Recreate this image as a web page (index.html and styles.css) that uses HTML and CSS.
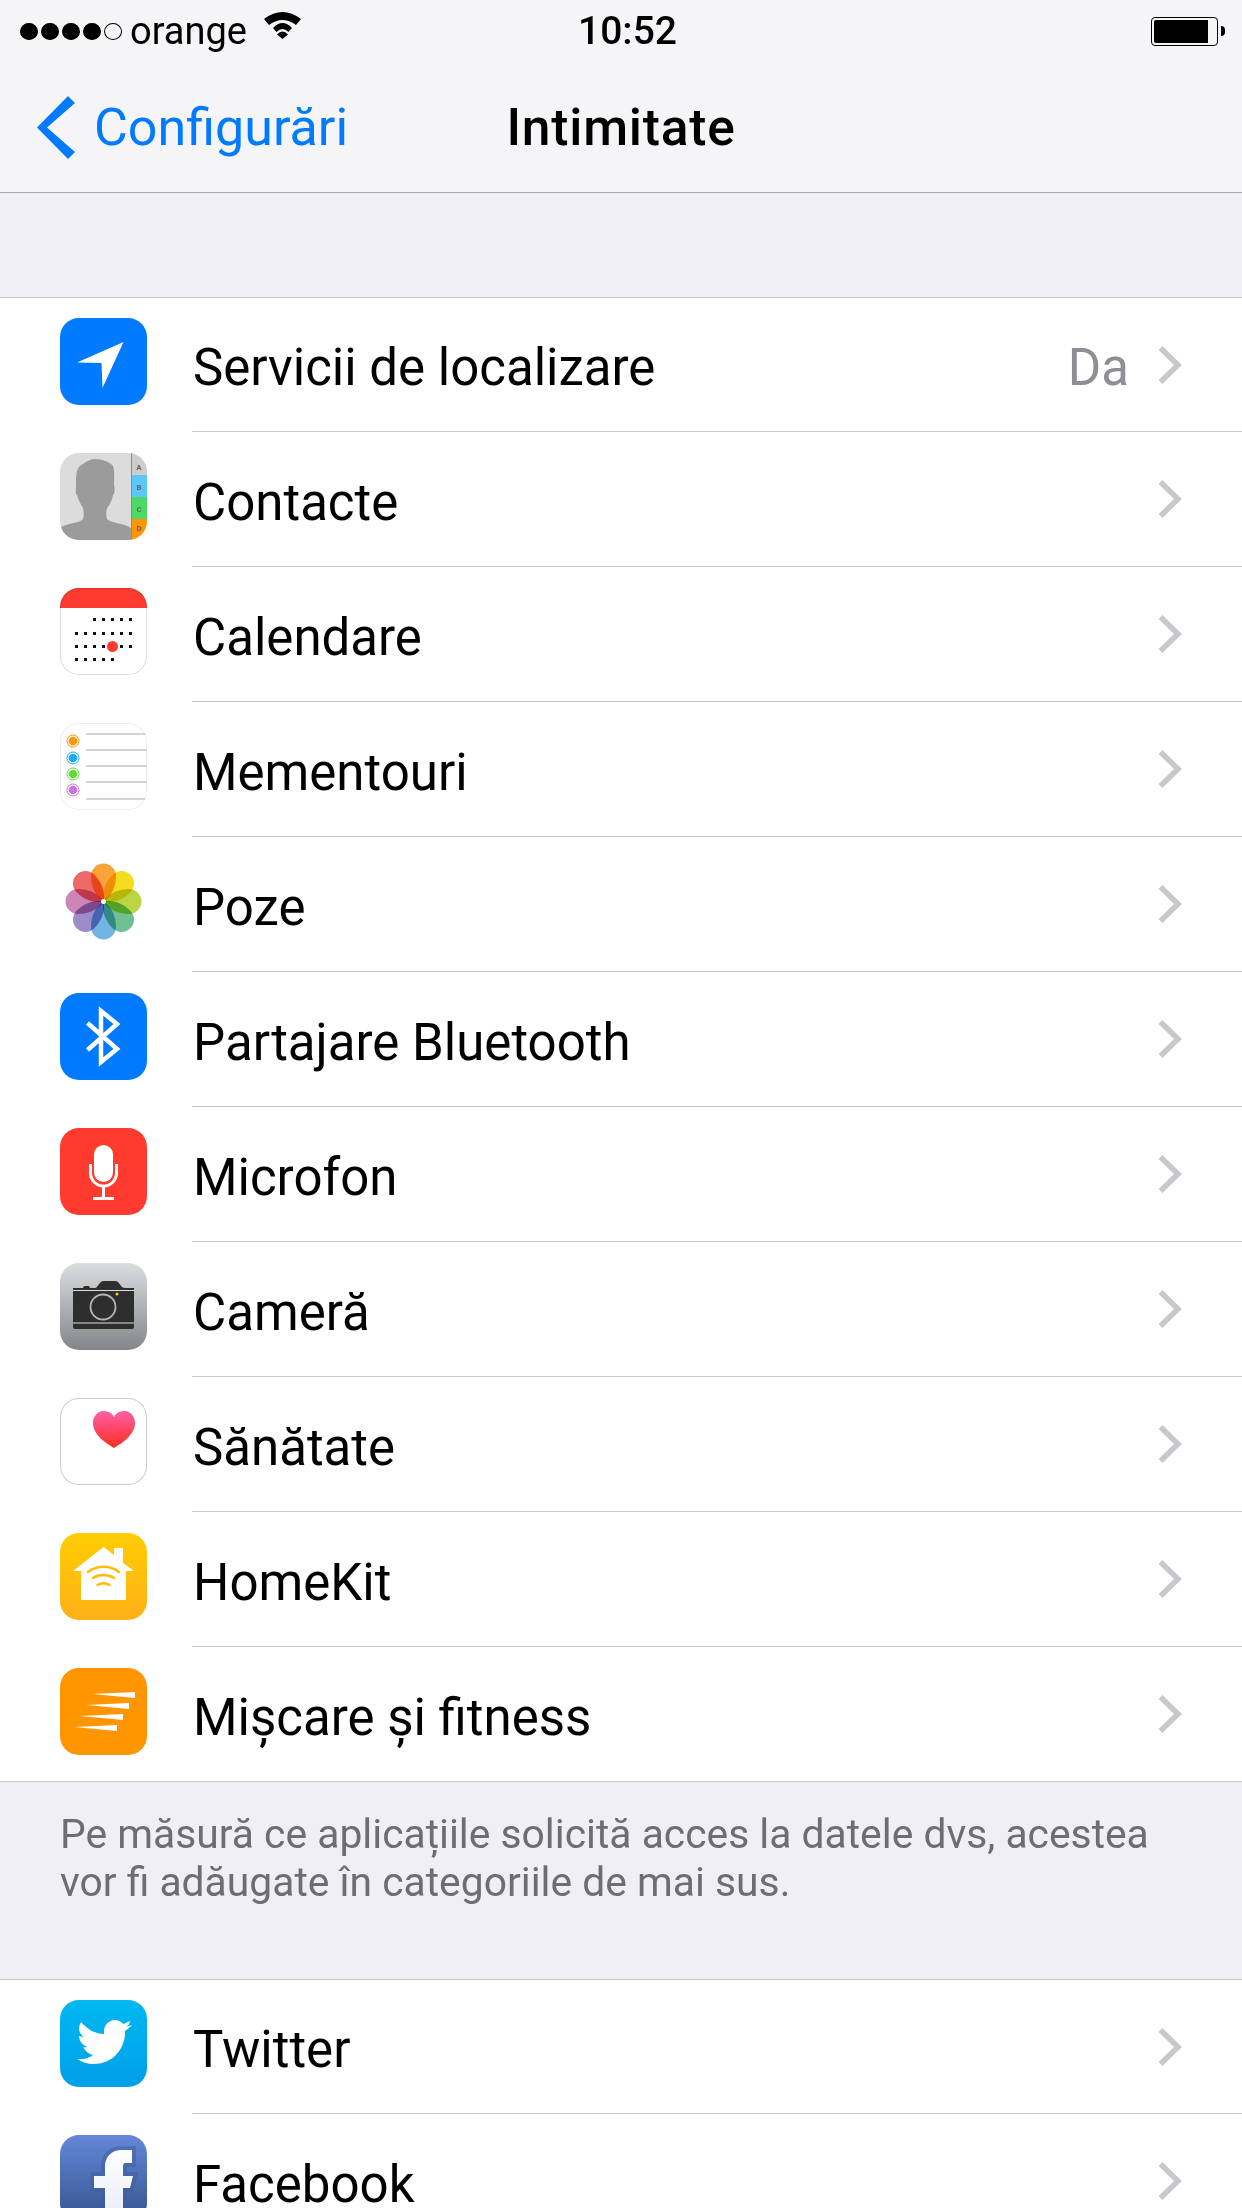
FILE: index.html
```html
<!DOCTYPE html>
<html lang="ro">
<head>
    <meta charset="UTF-8">
    <title>Intimitate</title>
    <link rel="stylesheet" href="styles.css">
</head>
<body>

    <header class="top">
        <div class="status">
            <div class="status-left">
                <span class="dots"><i></i><i></i><i></i><i></i><i class="off"></i></span>
                <span class="carrier">orange</span>
                <svg class="wifi" viewBox="0 0 37 27"><path d="M0 7Q18.500-7 37 7L32 13Q18.500 3 5 13Z"/><path d="M9 16Q18.500 6 28 16L24.500 20Q18.500 14 12.500 20Z"/><path d="M13 22.500Q18.500 16.500 24 22.500L18.500 27Z"/></svg>
            </div>
            <span class="clock">10:52</span>
            <div class="status-right">
                <span class="battery"><b></b></span><span class="nub"></span>
            </div>
        </div>
        <nav class="nav">
            <a class="back">
                <svg class="back-arrow" viewBox="0 0 38 63"><path d="M31 0 38 7 10 31.500 38 56 31 63 0 31.500Z" fill="#007aff"/></svg>
                <span>Configurări</span>
            </a>
            <h1>Intimitate</h1>
        </nav>
    </header>

    <ul class="group first">
        <li class="row">
            <span class="icon"><svg viewBox="0 0 87 87"><rect width="87" height="87" fill="#007aff"/><path d="M17 44.500 63.500 24 42.500 70 41.500 45Z" fill="#fff"/></svg></span>
            <span class="name">Servicii de localizare</span><span class="value">Da</span><svg class="chev" viewBox="0 0 24 40"><path d="M2.500 3 20 20 2.500 37" fill="none" stroke="#c7c7cc" stroke-width="5.500"/></svg>
        </li>
        <li class="row">
            <span class="icon"><svg viewBox="0 0 87 87"><rect width="87" height="87" fill="#dcdcdc"/><path d="M1 74C8 70 20 70 23 66 24 62 24 59 23 55 20 50 18 46 17 42 15 40 16 36 16 32 16 25 16 16 20 13 26 9 30 6 35 6 42 6 50 9 53 13 55 18 54 26 54 32 55 36 55 40 53 42 52 47 50 52 47 55 46 59 46 62 47 66 50 70 64 70 71 75V87H1Z" fill="#9b9b9b"/><rect x="71" width="16" height="22" fill="#cfcdc9"/><rect x="71" y="22" width="16" height="22" fill="#5ac8fa"/><rect x="71" y="44" width="16" height="22" fill="#4cd964"/><rect x="71" y="66" width="16" height="21" fill="#ff9500"/><path d="M71 0h1v87h-1z" fill="#8e8e8e"/><g class="tab-letters"><text x="79" y="17">A</text><text x="79" y="37">B</text><text x="79" y="59">C</text><text x="79" y="78">D</text></g></svg></span>
            <span class="name">Contacte</span><svg class="chev" viewBox="0 0 24 40"><path d="M2.500 3 20 20 2.500 37" fill="none" stroke="#c7c7cc" stroke-width="5.500"/></svg>
        </li>
        <li class="row">
            <span class="icon lined"><svg viewBox="0 0 87 87"><rect width="87" height="87" fill="#fff"/><rect width="87" height="20" fill="#ff3b30"/><g fill="#111"><path d="M33 30h3v3h-3zM42 30h3v3h-3zM51 30h3v3h-3zM60 30h3v3h-3zM69 30h3v3h-3zM15 44h3v3h-3zM24 44h3v3h-3zM33 44h3v3h-3zM42 44h3v3h-3zM51 44h3v3h-3zM60 44h3v3h-3zM69 44h3v3h-3zM15 57h3v3h-3zM24 57h3v3h-3zM33 57h3v3h-3zM42 57h3v3h-3zM60 57h3v3h-3zM69 57h3v3h-3zM15 70h3v3h-3zM24 70h3v3h-3zM33 70h3v3h-3zM42 70h3v3h-3zM51 70h3v3h-3z"/></g><circle cx="52.500" cy="58.500" r="5.500" fill="#ff3b30"/></svg></span>
            <span class="name">Calendare</span><svg class="chev" viewBox="0 0 24 40"><path d="M2.500 3 20 20 2.500 37" fill="none" stroke="#c7c7cc" stroke-width="5.500"/></svg>
        </li>
        <li class="row">
            <span class="icon lined pale"><svg viewBox="0 0 87 87"><rect width="87" height="87" fill="#fff"/><path d="M26 11h61M26 27h61M26 43h61M26 59h61M26 76h61" stroke="#aaa" stroke-width="1"/><g fill="none" stroke-width="1"><circle cx="13" cy="18" r="6" stroke="#ff9500"/><circle cx="13" cy="35" r="6" stroke="#1badf8"/><circle cx="13" cy="51" r="6" stroke="#63da38"/><circle cx="13" cy="67" r="6" stroke="#cc73e1"/></g><circle cx="13" cy="18" r="4.300" fill="#ff9500"/><circle cx="13" cy="35" r="4.300" fill="#1badf8"/><circle cx="13" cy="51" r="4.300" fill="#63da38"/><circle cx="13" cy="67" r="4.300" fill="#cc73e1"/></svg></span>
            <span class="name">Mementouri</span><svg class="chev" viewBox="0 0 24 40"><path d="M2.500 3 20 20 2.500 37" fill="none" stroke="#c7c7cc" stroke-width="5.500"/></svg>
        </li>
        <li class="row">
            <span class="icon"><svg viewBox="0 0 87 87"><defs><path id="petal" d="M43.500 43.500C35 38 31 28 31 18A12.500 12.500 0 0 1 56 18C56 28 52 38 43.500 43.500Z"/></defs><rect width="87" height="87" fill="#fff"/><use class="petal" href="#petal" fill="#f9a33b"/><use class="petal" href="#petal" fill="#f6dc1e" transform="rotate(45 43.500 43.500)"/><use class="petal" href="#petal" fill="#bcd544" transform="rotate(90 43.500 43.500)"/><use class="petal" href="#petal" fill="#6fc193" transform="rotate(135 43.500 43.500)"/><use class="petal" href="#petal" fill="#72b5e3" transform="rotate(180 43.500 43.500)"/><use class="petal" href="#petal" fill="#9c8cc8" transform="rotate(225 43.500 43.500)"/><use class="petal" href="#petal" fill="#cc85b5" transform="rotate(270 43.500 43.500)"/><use class="petal" href="#petal" fill="#ee6a6a" transform="rotate(315 43.500 43.500)"/><circle cx="43.500" cy="43.500" r="2.500" fill="#fff"/></svg></span>
            <span class="name">Poze</span><svg class="chev" viewBox="0 0 24 40"><path d="M2.500 3 20 20 2.500 37" fill="none" stroke="#c7c7cc" stroke-width="5.500"/></svg>
        </li>
        <li class="row">
            <span class="icon"><svg viewBox="0 0 87 87"><rect width="87" height="87" fill="#007aff"/><path d="M27.500 30 57 56 41 69V18L57 31 27.500 57" fill="none" stroke="#fff" stroke-width="4.500"/></svg></span>
            <span class="name">Partajare Bluetooth</span><svg class="chev" viewBox="0 0 24 40"><path d="M2.500 3 20 20 2.500 37" fill="none" stroke="#c7c7cc" stroke-width="5.500"/></svg>
        </li>
        <li class="row">
            <span class="icon"><svg viewBox="0 0 87 87"><rect width="87" height="87" fill="#ff3b30"/><rect x="34" y="17" width="19" height="37" rx="9.500" fill="#fff"/><path d="M30.500 36v9a13 13 0 0 0 26 0v-9M43.500 58v12M33 70.500h21" fill="none" stroke="#fff" stroke-width="3"/></svg></span>
            <span class="name">Microfon</span><svg class="chev" viewBox="0 0 24 40"><path d="M2.500 3 20 20 2.500 37" fill="none" stroke="#c7c7cc" stroke-width="5.500"/></svg>
        </li>
        <li class="row">
            <span class="icon cam"><svg viewBox="0 0 87 87"><path d="M13 25h10l1-2h5l1 2h5c3 0 4-7 9-7h11c5 0 5 7 10 7h9v39a2 2 0 0 1-2 2H15a2 2 0 0 1-2-2Z" fill="#2e2e2e"/><path d="M13 27.500h61M13 60h61" stroke="#ddd" stroke-width="1"/><circle cx="43" cy="44" r="12.500" fill="none" stroke="#b5b5b5" stroke-width="1.800"/><circle cx="57" cy="31" r="1.500" fill="#ffc72e"/></svg></span>
            <span class="name">Cameră</span><svg class="chev" viewBox="0 0 24 40"><path d="M2.500 3 20 20 2.500 37" fill="none" stroke="#c7c7cc" stroke-width="5.500"/></svg>
        </li>
        <li class="row">
            <span class="icon lined heart"><svg viewBox="0 0 87 87"><defs><linearGradient id="hg" x1="0" y1="0" x2="0" y2="1"><stop offset="0" stop-color="#ff5fa8"/><stop offset="1" stop-color="#ff2d20"/></linearGradient></defs><rect width="87" height="87" fill="#fff"/><path d="M54 50c-8-5-21-13-21-25 0-7 5-12 10-12 5 0 9 2 11 6 2-4 6-6 11-6 5 0 10 5 10 12 0 12-13 20-21 25Z" fill="url(#hg)"/></svg></span>
            <span class="name">Sănătate</span><svg class="chev" viewBox="0 0 24 40"><path d="M2.500 3 20 20 2.500 37" fill="none" stroke="#c7c7cc" stroke-width="5.500"/></svg>
        </li>
        <li class="row">
            <span class="icon home"><svg viewBox="0 0 87 87"><path d="M13 38 43.500 14 54 22v-7h9v15l11 8h-8v29H21V38Z" fill="#fff"/><g fill="none" stroke="#ffbd0a" stroke-width="2.500" stroke-linecap="round"><path d="M28 39c9-7 22-7 31 0"/><path d="M33 45c6-4 15-4 21 0"/><path d="M37.500 52c3.500-2 8.500-2 12 0"/></g></svg></span>
            <span class="name">HomeKit</span><svg class="chev" viewBox="0 0 24 40"><path d="M2.500 3 20 20 2.500 37" fill="none" stroke="#c7c7cc" stroke-width="5.500"/></svg>
        </li>
        <li class="row">
            <span class="icon"><svg viewBox="0 0 87 87"><rect width="87" height="87" fill="#ff9500"/><path d="M32 26 75 24v6ZM26 37 69 35v6ZM20 48 63 46v6ZM14 59 57 57v6Z" fill="#fff"/></svg></span>
            <span class="name">Mișcare și fitness</span><svg class="chev" viewBox="0 0 24 40"><path d="M2.500 3 20 20 2.500 37" fill="none" stroke="#c7c7cc" stroke-width="5.500"/></svg>
        </li>
    </ul>

    <p class="note">Pe măsură ce aplicațiile solicită acces la datele dvs, acestea vor fi adăugate în categoriile de mai sus.</p>

    <ul class="group">
        <li class="row">
            <span class="icon twitter"><svg viewBox="0 0 87 87"><path d="M72 25c-2 1-4 1-6 2 2-1 4-4 4-6-2 1-4 2-7 3-2-3-5-4-8-4-6 0-11 5-11 11v3c-9 0-17-5-23-12-1 2-2 4-2 6 0 4 2 7 5 9-2 0-4-1-5-1 0 5 4 10 9 11-1 0-3 1-5 0 2 4 6 7 10 8-4 3-10 5-16 4 5 3 10 5 17 5 20 0 31-17 31-31v-2c3-2 5-4 7-6Z" fill="#fff"/></svg></span>
            <span class="name">Twitter</span><svg class="chev" viewBox="0 0 24 40"><path d="M2.500 3 20 20 2.500 37" fill="none" stroke="#c7c7cc" stroke-width="5.500"/></svg>
        </li>
        <li class="row">
            <span class="icon facebook"><svg viewBox="0 0 87 87"><defs><linearGradient id="fg" x1="0" y1="0" x2="0" y2="1"><stop offset="0" stop-color="#fff"/><stop offset="1" stop-color="#e6ebf6"/></linearGradient></defs><path d="M45 87V53H34V41H45V32C45 21 52 15 62 15H72V28H66C63 28 63 30 63 33V41H73L70 53H63V87Z" fill="url(#fg)" stroke="#3c5a9c" stroke-opacity=".45" stroke-width="8" paint-order="stroke"/></svg></span>
            <span class="name">Facebook</span><svg class="chev" viewBox="0 0 24 40"><path d="M2.500 3 20 20 2.500 37" fill="none" stroke="#c7c7cc" stroke-width="5.500"/></svg>
        </li>
    </ul>

</body>
</html>
```

FILE: styles.css
```css
html, body {
    margin: 0;
    height: 2208px;
    overflow: hidden;
}
body {
    background: #efeff4;
    font-family: Roboto, "Liberation Sans", sans-serif;
    color: #000;
}
.top {
    height: 192px;
    background: #f5f5f7;
    border-bottom: 1px solid #a9a9ad;
}
.status {
    height: 62px;
    padding: 0 17px 0 20px;
    display: grid;
    grid-template-columns: 1fr auto 1fr;
    align-items: center;
}
.status-left {
    display: flex;
    align-items: center;
}
.dots {
    display: flex;
    gap: 3px;
    & i {
        box-sizing: border-box;
        width: 18px;
        height: 17px;
        border-radius: 50%;
        background: #000;
        border: 1px solid #000;
    }
    & .off {
        background: none;
    }
}
.carrier {
    font-size: 38px;
    margin-left: 8px;
    margin-top: -1px;
}
.wifi {
    width: 37px;
    height: 27px;
    margin-left: 17px;
    margin-top: -12px;
}
.clock {
    font-size: 39px;
    font-weight: 500;
    margin-left: 10px;
}
.status-right {
    display: flex;
    justify-content: flex-end;
    align-items: center;
}
.battery {
    box-sizing: border-box;
    width: 67px;
    height: 29px;
    border: 1px solid #000;
    border-radius: 4px;
    padding: 2px 9px 2px 2px;
    & b {
        display: block;
        height: 100%;
        background: #000;
        border-radius: 2px 0 0 2px;
    }
}
.nub {
    width: 4px;
    height: 10px;
    margin-left: 3px;
    background: #000;
    border-radius: 0 5px 5px 0;
}
.nav {
    height: 130px;
    display: grid;
    grid-template-columns: 1fr auto 1fr;
    align-items: center;
    & h1 {
        grid-column: 2;
        margin: 0;
        font-size: 51.5px;
        font-weight: 500;
        letter-spacing: 0.8px;
    }
}
.back {
    grid-column: 1;
    display: flex;
    align-items: center;
    color: #007aff;
    font-size: 52px;
    padding-left: 37px;
    & span {
        margin-left: 19px;
    }
}
.back-arrow {
    width: 38px;
    height: 63px;
}
.group {
    list-style: none;
    margin: 0;
    padding: 0;
    background: #fff;
    border-top: 1px solid #c8c7cc;
    border-bottom: 1px solid #c8c7cc;
}
.first {
    margin-top: 104px;
}
.row {
    box-sizing: border-box;
    height: 135px;
    margin-left: 192px;
    padding-right: 60px;
    display: flex;
    align-items: center;
    position: relative;
    border-bottom: 1px solid #c8c7cc;
}
.row:first-child {
    height: 134px;
}
.row:last-child {
    height: 134px;
    border-bottom: 0;
}
.icon {
    position: absolute;
    left: -132px;
    top: 21px;
    width: 87px;
    height: 87px;
    border-radius: 19px;
    overflow: hidden;
    & svg {
        display: block;
    }
}
.row:first-child .icon {
    top: 20px;
}
.tab-letters text {
    font-size: 8px;
    font-weight: 700;
    fill: #666;
    text-anchor: middle;
}
.petal {
    mix-blend-mode: multiply;
}
.lined {
    box-shadow: inset 0 0 0 1px #ddd;
    & svg {
        mix-blend-mode: multiply;
    }
}
.pale {
    box-shadow: inset 0 0 0 1px #eee;
}
.heart {
    box-shadow: inset 0 0 0 1px #ccc;
}
.cam {
    background: linear-gradient(#dcdde0, #85868a);
}
.home {
    background: linear-gradient(#ffcd02, #ffb116);
}
.twitter {
    background: linear-gradient(#00b8f2, #009fe8);
}
.facebook {
    background: linear-gradient(#6388d6, #36538f);
}
.name {
    flex: 1;
    font-size: 51px;
    padding-left: 1px;
    padding-top: 6px;
}
.value {
    font-size: 51px;
    color: #8e8e93;
    margin-right: 29px;
    padding-top: 6px;
}
.chev {
    width: 24px;
    height: 40px;
}
.note {
    margin: 0;
    height: 197px;
    box-sizing: border-box;
    padding: 28px 60px 0;
    font-size: 40.8px;
    line-height: 48px;
    color: #6d6d72;
}
```
